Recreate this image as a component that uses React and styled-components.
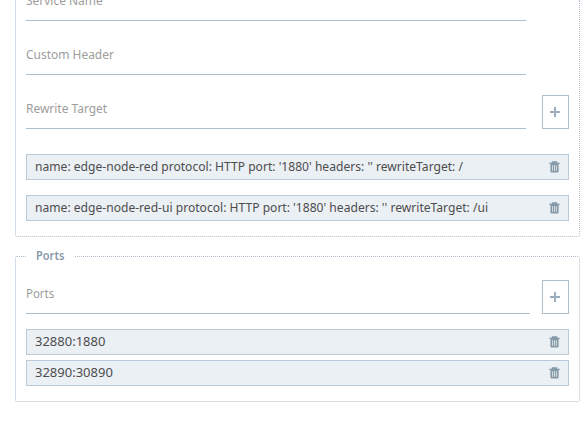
import React from "react";
import styled, { createGlobalStyle } from "styled-components";

const GlobalStyle = createGlobalStyle`
  * { box-sizing: border-box; }
  body {
    margin: 0;
    background: #fff;
    overflow: hidden;
    font-family: "Noto Sans", "Open Sans", sans-serif;
  }
`;

const Page = styled.main`
  width: 586px;
  height: 426px;
  padding: 0 6px 0 15px;
  overflow: hidden;
`;

const Group = styled.section`
  width: 565px;
  height: ${(p) => p.$height}px;
  padding: 0 10px;
  border: 1px dotted #b0bfcd;
  border-left: 1px solid #d3dee8;
  border-radius: 2px;
`;

const ServiceGroup = styled(Group)`
  border-top: 0;
  border-radius: 0 0 2px 2px;
  overflow: hidden;
`;

const PortsGroup = styled(Group)`
  margin-top: 19px;
`;

const Legend = styled.h2`
  width: 49px;
  height: 18px;
  margin: -10px 0 0;
  padding-left: 10px;
  background: #fff;
  color: #8799a9;
  font-size: 13px;
  font-weight: 600;
  line-height: 16px;
`;

const CondensedText = styled.span`
  display: inline-block;
  transform: scaleX(${(p) => p.$scale});
  transform-origin: left center;
  white-space: nowrap;
`;

const Fields = styled.div`
  margin-top: -33px;
`;

const FieldRow = styled.div`
  display: flex;
  justify-content: space-between;
  align-items: flex-end;
  height: ${(p) => p.$height || 54}px;
`;

const Field = styled.div`
  width: ${(p) => p.$width || 500}px;
  height: 34px;
  border-bottom: 1px solid #abbfce;
  color: #9d9d9d;
  font-size: 13px;
  line-height: 27px;
`;

const AddButton = styled.button`
  display: flex;
  align-items: center;
  justify-content: center;
  width: 27px;
  height: 34px;
  padding: 0;
  border: 1px solid #abbfce;
  background: #fff;
`;

const List = styled.div`
  display: flex;
  flex-direction: column;
  gap: ${(p) => p.$gap}px;
  margin-top: ${(p) => p.$top}px;
`;

const Item = styled.div`
  display: flex;
  align-items: flex-start;
  justify-content: space-between;
  height: 26px;
  padding: 0 8px;
  border: 1px solid #b9c9d8;
  background: #ebf0f5;
  color: #4d4d4d;
  font-size: 13px;
  line-height: 22px;

  svg {
    margin-top: 6px;
  }
`;

const PlusIcon = () => (
  <svg width="11" height="12" viewBox="0 0 11 12" shapeRendering="crispEdges">
    <path d="M0 5h10v2H0zM4 1h2v10H4z" fill="#9dafbf" />
  </svg>
);

const TrashIcon = () => (
  <svg width="11" height="12" viewBox="0 0 11 12">
    <path
      d="M3.4 2V1h4.2v1M.3 2.4h10.4"
      fill="none"
      stroke="#8599a8"
      strokeWidth="1.3"
    />
    <path d="M1.4 3h8.2v7.2q0 1.2-1.2 1.2H2.6q-1.2 0-1.2-1.2z" fill="#8599a8" />
    <path d="M3.6 4.2v5.6M5.5 4.2v5.6M7.4 4.2v5.6" stroke="#dfe6e8" strokeWidth=".9" />
  </svg>
);

const services = [
  { text: "name: edge-node-red protocol: HTTP port: '1880' headers: '' rewriteTarget: /", scale: 0.93 },
  { text: "name: edge-node-red-ui protocol: HTTP port: '1880' headers: '' rewriteTarget: /ui", scale: 0.93 },
];

const ports = [
  { text: "32880:1880", scale: 1 },
  { text: "32890:30890", scale: 1 },
];

const EntryList = ({ items, gap, top }) => (
  <List $gap={gap} $top={top}>
    {items.map((item) => (
      <Item key={item.text}>
        <CondensedText $scale={item.scale}>{item.text}</CondensedText>
        <TrashIcon />
      </Item>
    ))}
  </List>
);

const TextField = ({ label, width, scale = 0.92 }) => (
  <Field $width={width}>
    <CondensedText $scale={scale}>{label}</CondensedText>
  </Field>
);

export default function App() {
  return (
    <>
      <GlobalStyle />
      <Page>
        <ServiceGroup $height={237}>
          <Fields>
            <FieldRow><TextField label="Service Name" /></FieldRow>
            <FieldRow><TextField label="Custom Header" /></FieldRow>
            <FieldRow>
              <TextField label="Rewrite Target" />
              <AddButton aria-label="Add service"><PlusIcon /></AddButton>
            </FieldRow>
          </Fields>
          <EntryList items={services} gap={15} top={25} />
        </ServiceGroup>
        <PortsGroup $height={146}>
          <Legend><CondensedText $scale={0.85}>Ports</CondensedText></Legend>
          <FieldRow $height={49}>
            <TextField label="Ports" width={504} scale={0.88} />
            <AddButton aria-label="Add port"><PlusIcon /></AddButton>
          </FieldRow>
          <EntryList items={ports} gap={5} top={15} />
        </PortsGroup>
      </Page>
    </>
  );
}
